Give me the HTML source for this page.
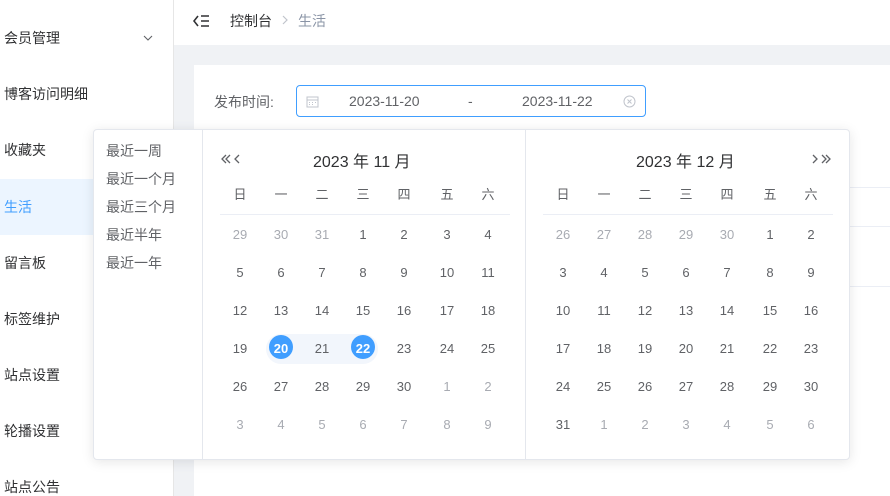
<!DOCTYPE html>
<html><head><meta charset="utf-8"><style>
*{margin:0;padding:0;box-sizing:border-box}
html,body{width:890px;height:496px;overflow:hidden}
body{background:#f0f2f5;font-family:"Liberation Sans","Noto Sans CJK SC",sans-serif;position:relative;color:#303133}
.side{position:absolute;left:0;top:0;width:174px;height:496px;background:#fff;border-right:1px solid #e6e6e6}
.mi{position:absolute;left:0;width:174px;height:56px;line-height:56px;padding-left:4px;font-size:14px;color:#303133}
.mi.act{background:#ecf5ff;color:#409eff}
.hdr{position:absolute;left:174px;top:0;right:0;height:45px;background:#fff;font-size:14px}
.card{position:absolute;left:194px;top:65px;right:0;height:431px;background:#fff}
.line{position:absolute;left:849px;right:0;height:1px;background:#ebeef5}
.pop{position:absolute;left:93px;top:129px;width:757px;height:331px;background:#fff;border:1px solid #e4e7ed;border-radius:4px;box-shadow:0 2px 12px rgba(0,0,0,.1)}
.sc{position:absolute;left:12px;font-size:14px;color:#606266}
.d{position:absolute;width:30px;margin-left:-15px;text-align:center;font-size:13px;color:#606266;line-height:24px;height:24px}
.g{color:#a8abb2}
.t{position:absolute;font-size:16px;color:#303133}
</style></head><body>
<div class="side">
<div class="mi" style="top:10px">会员管理<svg style="position:absolute;left:143px;top:25px" width="10" height="6" viewBox="0 0 10 6"><path d="M1 1l4 4 4-4" fill="none" stroke="#606266" stroke-width="1.1"/></svg></div>
<div class="mi" style="top:66px">博客访问明细</div>
<div class="mi" style="top:122px">收藏夹</div>
<div class="mi act" style="top:179px">生活</div>
<div class="mi" style="top:235px">留言板</div>
<div class="mi" style="top:291px">标签维护</div>
<div class="mi" style="top:347px">站点设置</div>
<div class="mi" style="top:403px">轮播设置</div>
<div class="mi" style="top:459px">站点公告</div>
</div>
<div class="hdr">
<svg style="position:absolute;left:19px;top:13px" width="18" height="16" viewBox="0 0 18 16"><path d="M5 3 L1 8 L5 13" fill="none" stroke="#303133" stroke-width="1.6"/><path d="M8 3H16M8 8H16M8 13H16" stroke="#303133" stroke-width="1.6"/></svg>
<span style="position:absolute;left:56px;top:11px">控制台</span>
<svg style="position:absolute;left:108px;top:15px" width="6" height="10" viewBox="0 0 6 10"><path d="M1 1l4 4-4 4" fill="none" stroke="#c0c4cc" stroke-width="1.2"/></svg>
<span style="position:absolute;left:124px;top:11px;color:#8a94a6">生活</span>
</div>
<div class="card"></div>
<div class="line" style="top:187px"></div><div class="line" style="top:226px"></div><div class="line" style="top:286px"></div>
<span style="position:absolute;left:214px;top:92px;font-size:14px;color:#606266">发布时间:</span>
<div style="position:absolute;left:296px;top:85px;width:350px;height:32px;border:1px solid #409eff;border-radius:4px;background:#fff;font-size:14px;color:#606266">
<svg style="position:absolute;left:9px;top:9px" width="13" height="13" viewBox="0 0 13 13"><rect x="1" y="2" width="11" height="10" fill="none" stroke="#c0c4cc"/><path d="M1 5H12M3 7.5h1M6 7.5h1M9 7.5h1M3 9.5h1M6 9.5h1" stroke="#c0c4cc"/></svg>
<span style="position:absolute;left:52px;top:7px">2023-11-20</span>
<span style="position:absolute;left:171px;top:7px">-</span>
<span style="position:absolute;left:225px;top:7px">2023-11-22</span>
<svg style="position:absolute;left:326px;top:9px" width="13" height="13" viewBox="0 0 13 13"><circle cx="6.5" cy="6.5" r="5.5" fill="none" stroke="#c0c4cc"/><path d="M4.5 4.5l4 4M8.5 4.5l-4 4" stroke="#c0c4cc"/></svg>
</div>
<div class="pop">
<div style="position:absolute;left:108px;top:0;bottom:0;width:1px;background:#e4e7ed"></div>
<div style="position:absolute;left:431px;top:0;bottom:0;width:1px;background:#e4e7ed"></div>
<div class="sc" style="top:11px">最近一周</div><div class="sc" style="top:39px">最近一个月</div><div class="sc" style="top:67px">最近三个月</div><div class="sc" style="top:95px">最近半年</div><div class="sc" style="top:123px">最近一年</div>
<div style="position:absolute;left:126px;top:84px;width:290px;height:1px;background:#ebeef5"></div>
<div style="position:absolute;left:449px;top:84px;width:290px;height:1px;background:#ebeef5"></div>
<div style="position:absolute;left:172px;top:204px;width:112px;height:30px;border-radius:15px;background:#f2f6fc"></div>
<div style="position:absolute;left:175px;top:205px;width:24px;height:24px;border-radius:12px;background:#409eff"></div>
<div style="position:absolute;left:257px;top:205px;width:24px;height:24px;border-radius:12px;background:#409eff"></div>
<svg style="position:absolute;left:127px;top:24px" width="24" height="10" viewBox="0 0 24 10"><path d="M5 1L1 5l4 4M9 1L5 5l4 4M18 1l-4 4 4 4" fill="none" stroke="#606266" stroke-width="1.3"/></svg>
<svg style="position:absolute;left:716px;top:24px" width="24" height="10" viewBox="0 0 24 10"><path d="M3 1l4 4-4 4M12 1l4 4-4 4M16 1l4 4-4 4" fill="none" stroke="#606266" stroke-width="1.3"/></svg>
<span class="t" style="left:219px;top:18px">2023 年 11 月</span>
<span class="t" style="left:542px;top:18px">2023 年 12 月</span>
<div id="cal"></div>
</div>
<script>
var c=document.getElementById('cal'),h='';
var L=[146,187,228,269,310,353,394],R=[469,510,551,592,633,676,717];
var wd=['日','一','二','三','四','五','六'];
function cell(x,y,t,cl,st){h+='<div class="d '+cl+'" style="left:'+x+'px;top:'+(y-12)+'px;'+(st||'')+'">'+t+'</div>';}
for(var i=0;i<7;i++){cell(L[i],65,wd[i],'');cell(R[i],65,wd[i],'');}
var rows=[105,143,181,219,257,295];
var n=[29,30,31];for(var d=1;d<=30;d++)n.push(d);for(d=1;d<=9;d++)n.push(d);
for(i=0;i<42;i++){var g=(i<3||i>=33);var st='';if(i==22||i==24)st='color:#fff;font-weight:bold';cell(L[i%7],rows[Math.floor(i/7)],n[i],g?'g':'',st);}
n=[26,27,28,29,30];for(d=1;d<=31;d++)n.push(d);for(d=1;d<=6;d++)n.push(d);
for(i=0;i<42;i++){cell(R[i%7],rows[Math.floor(i/7)],n[i],(i<5||i>=36)?'g':'');}
c.innerHTML=h;
</script>
</body></html>
